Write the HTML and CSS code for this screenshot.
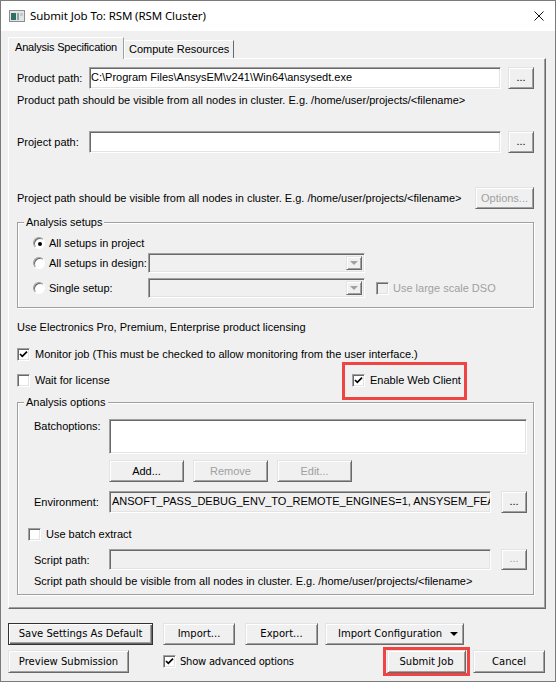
FILE: index.html
```html
<!DOCTYPE html>
<html lang="en">
  <head>
    <meta charset="utf-8" />
    <title>Submit Job To: RSM (RSM Cluster)</title>
    <link rel="stylesheet" href="styles.css">
  </head>
  <body>
    <div class="window">
      <div class="titlebar">
        <svg class="app-icon" width="16" height="12" viewBox="0 0 16 12">
          <rect x="0.5" y="0.5" width="15" height="11" fill="#e4e4e4" stroke="#8c8c8c" />
          <rect x="2" y="3" width="5" height="7" fill="#2f6f63" />
          <rect x="8" y="3" width="2" height="7" fill="#7fa8a0" />
          <rect x="11" y="3" width="3" height="3" fill="#c8c8c8" />
        </svg>
        <span class="title">Submit Job To: RSM (RSM Cluster)</span>
        <svg class="close" width="10" height="10" viewBox="0 0 10 10">
          <path d="M0.5 0.5 L9.5 9.5 M9.5 0.5 L0.5 9.5" stroke="#111" stroke-width="1" fill="none" />
        </svg>
      </div>

      <div class="client">
        <div class="tabs">
          <div class="tab active">Analysis Specification</div>
          <div class="tab">Compute Resources</div>
        </div>

        <div class="panel">
          <div class="row path-row">
            <span class="label">Product path:</span>
            <div class="field">C:\Program Files\AnsysEM\v241\Win64\ansysedt.exe</div>
            <button class="btn browse">...</button>
          </div>
          <p class="hint">Product path should be visible from all nodes in cluster. E.g. /home/user/projects/&lt;filename&gt;</p>

          <div class="row path-row project-row">
            <span class="label">Project path:</span>
            <div class="field"></div>
            <button class="btn browse">...</button>
          </div>
          <div class="row hint-row">
            <span>Project path should be visible from all nodes in cluster. E.g. /home/user/projects/&lt;filename&gt;</span>
            <button class="btn options" disabled>Options...</button>
          </div>

          <fieldset class="group setups">
            <legend>Analysis setups</legend>
            <div class="radio-row">
              <span class="radio-label"><span class="radio checked"></span>All setups in project</span>
            </div>
            <div class="radio-row">
              <span class="radio-label"><span class="radio"></span>All setups in design:</span>
              <div class="combo"><span class="combo-arrow"></span></div>
            </div>
            <div class="radio-row last">
              <span class="radio-label"><span class="radio"></span>Single setup:</span>
              <div class="combo"><span class="combo-arrow"></span></div>
              <span class="checkline dso disabled"><span class="check"></span>Use large scale DSO</span>
            </div>
          </fieldset>

          <p class="licensing">Use Electronics Pro, Premium, Enterprise product licensing</p>

          <div class="row check-row monitor">
            <span class="checkline"><span class="check on"><svg width="11" height="11" viewBox="0 0 11 11"><path d="M2 5 L4.3 7.3 L9 2.6" /></svg></span>Monitor job (This must be checked to allow monitoring from the user interface.)</span>
          </div>
          <div class="row check-row wait">
            <span class="checkline wait-license"><span class="check"></span>Wait for license</span>
            <span class="checkline highlight"><span class="check on"><svg width="11" height="11" viewBox="0 0 11 11"><path d="M2 5 L4.3 7.3 L9 2.6" /></svg></span>Enable Web Client</span>
          </div>

          <fieldset class="group options-group">
            <legend>Analysis options</legend>
            <div class="row batch-row">
              <span class="opt-label">Batchoptions:</span>
              <div class="field textarea"></div>
            </div>
            <div class="row batch-buttons">
              <button class="btn small">Add...</button>
              <button class="btn small" disabled>Remove</button>
              <button class="btn small" disabled>Edit...</button>
            </div>
            <div class="row env-row">
              <span class="opt-label">Environment:</span>
              <div class="field readonly">ANSOFT_PASS_DEBUG_ENV_TO_REMOTE_ENGINES=1, ANSYSEM_FEAT</div>
              <button class="btn browse">...</button>
            </div>
            <div class="row check-row extract">
              <span class="checkline"><span class="check"></span>Use batch extract</span>
            </div>
            <div class="row env-row script-row">
              <span class="opt-label">Script path:</span>
              <div class="field readonly"></div>
              <button class="btn browse" disabled>...</button>
            </div>
            <p class="hint script-hint">Script path should be visible from all nodes in cluster. E.g. /home/user/projects/&lt;filename&gt;</p>
          </fieldset>
        </div>

        <div class="footer">
          <div class="footer-row">
            <button class="btn fbtn default save">Save Settings As Default</button>
            <button class="btn fbtn import">Import...</button>
            <button class="btn fbtn export">Export...</button>
            <button class="btn fbtn config">Import Configuration<span class="drop"></span></button>
          </div>
          <div class="footer-row second">
            <button class="btn fbtn preview">Preview Submission</button>
            <span class="checkline advanced"><span class="check on"><svg width="11" height="11" viewBox="0 0 11 11"><path d="M2 5 L4.3 7.3 L9 2.6" /></svg></span>Show advanced options</span>
            <span class="highlight-btn"><button class="btn fbtn submit">Submit Job</button></span>
            <button class="btn fbtn cancel">Cancel</button>
          </div>
        </div>
      </div>
    </div>
  </body>
</html>
```

FILE: styles.css
```css
html {
  font-family: "Liberation Sans", Arial, sans-serif;
  font-size: 11px;
  line-height: 14px;
  color: #000;
}

body {
  margin: 0;
}

p {
  margin: 0;
}

.window {
  box-sizing: border-box;
  width: 556px;
  height: 682px;
  border: 1px solid #7a7a7a;
  display: flex;
  flex-direction: column;
  background-color: #f0f0f0;
}

/* title bar */
.titlebar {
  height: 30px;
  flex: none;
  display: flex;
  align-items: center;
  padding-left: 8px;
  background-color: #fff;
}

.app-icon {
  margin-right: 5px;
}

.title {
  flex: 1;
  font-family: "Noto Sans", sans-serif;
  font-size: 11.5px;
  letter-spacing: -0.1px;
}

.close {
  margin-right: 11px;
}

/* dialog body */
.client {
  flex: 1;
  display: flex;
  flex-direction: column;
  padding: 6px 9px 0 7px;
}

.tabs {
  display: flex;
  align-items: flex-end;
  height: 21px;
}

.tab {
  box-sizing: border-box;
  height: 18px;
  padding: 1px 4px 0;
  border: 1px solid;
  border-bottom: 0;
  border-color: #fff #696969 #696969 #fff;
  white-space: nowrap;
}

.tab.active {
  position: relative;
  z-index: 1;
  height: 22px;
  width: 116px;
  margin-bottom: -1px;
  padding: 2px 0 0 6px;
  letter-spacing: -0.2px;
  background-color: #f0f0f0;
  border-right-color: #a0a0a0;
}

.panel {
  box-sizing: border-box;
  height: 551px;
  display: flex;
  flex-direction: column;
  padding: 8px 11px 0 8px;
  border: 1px solid;
  border-color: #fff #696969 #696969 #fff;
  box-shadow: inset -1px -1px #a0a0a0;
}

.row {
  display: flex;
  align-items: center;
}

.path-row {
  height: 22px;
}

.path-row .label {
  width: 72px;
  flex: none;
}

.project-row {
  margin-top: 24px;
}

.hint {
  margin-top: 4px;
  height: 14px;
  white-space: nowrap;
}

.hint-row {
  margin-top: 34px;
  height: 22px;
  justify-content: space-between;
}

/* sunken edit fields */
.field {
  box-sizing: border-box;
  flex: 1;
  min-width: 0;
  height: 100%;
  padding: 0 1px;
  line-height: 18px;
  white-space: nowrap;
  overflow: hidden;
  background-color: #fff;
  border: 1px solid;
  border-color: #a0a0a0 #fff #fff #a0a0a0;
  box-shadow: inset 1px 1px #696969, inset -1px -1px #e3e3e3;
}

.field.readonly {
  background-color: #f0f0f0;
  padding-left: 2px;
}

/* raised push buttons */
.btn {
  box-sizing: border-box;
  margin: 0;
  padding: 0;
  font: inherit;
  color: #000;
  background-color: #f0f0f0;
  border: 1px solid;
  border-color: #e3e3e3 #696969 #696969 #e3e3e3;
  box-shadow: inset 1px 1px #fff, inset -1px -1px #a0a0a0;
  white-space: nowrap;
}

.btn:disabled {
  color: #a0a0a0;
}

.browse {
  flex: none;
  width: 26px;
  height: 22px;
  margin-left: 7px;
  padding-bottom: 3px;
}

.options {
  width: 59px;
  height: 22px;
}

/* group boxes */
.group {
  margin: 0;
  min-width: 0;
  border: 1px solid #a0a0a0;
  box-shadow: inset 1px 1px #fff, 1px 1px #fff;
}

.group legend {
  padding: 0 2px;
  line-height: 14px;
  background-color: #f0f0f0;
}

.setups {
  margin-top: 6px;
  padding: 4px 6px 9px 6px;
}

.radio-row {
  display: flex;
  align-items: center;
  height: 20px;
  padding-left: 9px;
}

.radio-row.last {
  margin-top: 5px;
}

.radio-label {
  display: flex;
  align-items: center;
  width: 115px;
  flex: none;
}

.radio {
  box-sizing: border-box;
  width: 12px;
  height: 12px;
  margin-right: 4px;
  border-radius: 50%;
  border: 1px solid;
  border-color: #a0a0a0 #fff #fff #a0a0a0;
  box-shadow: inset 1px 1px #696969;
  background-color: #fff;
  display: flex;
  align-items: center;
  justify-content: center;
}

.radio.checked::after {
  content: "";
  width: 4px;
  height: 4px;
  margin: 1px 0 0 1px;
  border-radius: 50%;
  background-color: #000;
}

.combo {
  box-sizing: border-box;
  width: 217px;
  height: 20px;
  display: flex;
  justify-content: flex-end;
  padding: 2px;
  border: 1px solid;
  border-color: #a0a0a0 #fff #fff #a0a0a0;
  box-shadow: inset 1px 1px #696969, inset -1px -1px #e3e3e3;
}

.combo-arrow {
  box-sizing: border-box;
  width: 16px;
  height: 14px;
  display: flex;
  align-items: center;
  justify-content: center;
  border: 1px solid;
  border-color: #e3e3e3 #696969 #696969 #e3e3e3;
  box-shadow: inset 1px 1px #fff, inset -1px -1px #a0a0a0;
}

.combo-arrow::after {
  content: "";
  border-left: 4px solid transparent;
  border-right: 4px solid transparent;
  border-top: 4px solid #a0a0a0;
}

/* check boxes */
.checkline {
  display: flex;
  align-items: center;
  white-space: nowrap;
}

.check {
  box-sizing: border-box;
  flex: none;
  width: 13px;
  height: 13px;
  margin-right: 5px;
  background-color: #fff;
  border: 1px solid;
  border-color: #a0a0a0 #fff #fff #a0a0a0;
  box-shadow: inset 1px 1px #696969, inset -1px -1px #e3e3e3;
  display: flex;
}

.check svg {
  display: block;
}

.check path {
  fill: none;
  stroke: #000;
  stroke-width: 1.7;
}

.checkline.disabled {
  color: #a0a0a0;
}

.checkline.disabled .check {
  background-color: #f0f0f0;
  margin-right: 4px;
}

.dso {
  margin-left: 11px;
}

.licensing {
  margin-top: 12px;
  height: 14px;
}

.check-row {
  height: 14px;
}

.monitor {
  margin-top: 13px;
}

.wait {
  margin-top: 12px;
}

.wait-license {
  width: 335px;
}

.highlight {
  border: 3px solid #ef4444;
  padding: 8px 3px 10px 7px;
  margin: -11px -6px -13px -10px;
}

/* analysis options */
.options-group {
  margin-top: 8px;
  padding: 10px 6px 6px 6px;
}

.opt-label {
  width: 75px;
  flex: none;
  padding-left: 10px;
}

.batch-row {
  align-items: flex-start;
  height: 35px;
}

.batch-row .field {
  height: 35px;
}

.batch-buttons {
  margin-top: 6px;
  padding-left: 85px;
  height: 22px;
}

.small {
  width: 75px;
  height: 22px;
  margin-right: 9px;
}

.env-row {
  margin-top: 9px;
  height: 22px;
}

.env-row .browse {
  margin-left: 10px;
}

.extract {
  margin-top: 14px;
  padding-left: 4px;
}

.script-row {
  margin-top: 8px;
  height: 21px;
}

.script-row .browse {
  height: 21px;
}

.script-hint {
  margin-top: 4px;
  padding-left: 10px;
}

/* bottom buttons */
.footer {
  font-family: "DejaVu Sans", sans-serif;
  font-size: 10px;
  letter-spacing: -0.25px;
}

.footer-row {
  display: flex;
  align-items: center;
  margin-top: 14px;
  height: 22px;
}

.footer-row.second {
  margin-top: 5px;
  height: 23px;
}

.fbtn {
  height: 22px;
}

.save {
  width: 145px;
  border-color: #333;
  box-shadow: inset 1px 1px #fff, inset -1px -1px #696969, inset -2px -2px #a0a0a0;
}

.import {
  width: 72px;
  margin-left: 10px;
}

.export {
  width: 73px;
  margin-left: 10px;
}

.config {
  width: 139px;
  margin-left: 7px;
  display: flex;
  align-items: center;
  padding-left: 12px;
}

.drop {
  margin-left: auto;
  margin-right: 5px;
  border-left: 4px solid transparent;
  border-right: 4px solid transparent;
  border-top: 4px solid #000;
}

.preview {
  width: 121px;
  height: 23px;
}

.advanced {
  margin-left: 34px;
  width: 224px;
}

.advanced .check {
  margin-right: 4px;
}

.highlight-btn {
  display: flex;
  padding: 0 1px;
  margin: -3px 3px -3px -4px;
  border: 3px solid #ef4444;
}

.submit {
  width: 79px;
  height: 23px;
}

.cancel {
  width: 72px;
  height: 23px;
}
```
